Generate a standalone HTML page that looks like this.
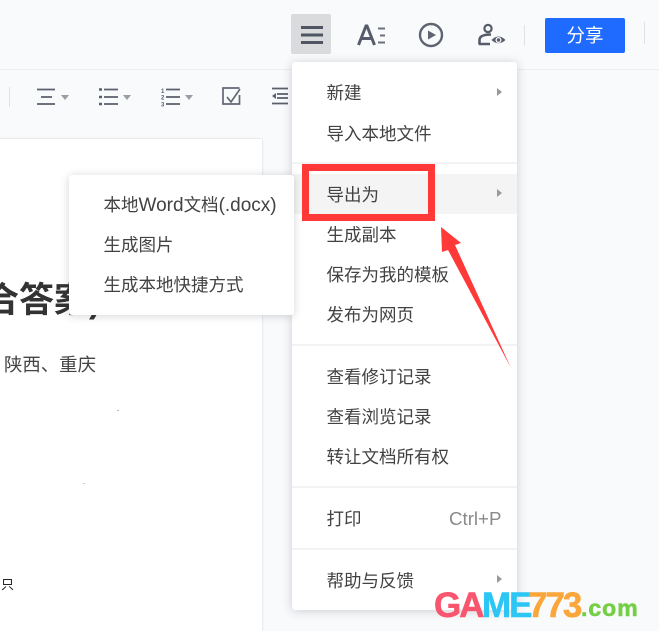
<!DOCTYPE html>
<html lang="zh"><head><meta charset="utf-8">
<style>
html,body{margin:0;padding:0;width:659px;height:631px;overflow:hidden}
body{position:relative;background:#f9fafc;font-family:"Liberation Sans","Noto Sans CJK SC",sans-serif;color:#424242}
.a{position:absolute}
.doc{left:-20px;top:139px;width:282px;height:492px;background:#fff;box-shadow:0 0 2px rgba(0,0,0,.18)}
.hl{left:0;top:69px;width:659px;height:1px;background:#eceef1}
.menu{left:292px;top:62px;width:225px;height:548px;background:#fff;border-radius:3px;box-shadow:0 1px 10px rgba(40,45,60,.22)}
.sub{left:69px;top:175px;width:225px;height:140px;background:#fff;border-radius:3px;box-shadow:0 1px 9px rgba(40,45,60,.2)}
.t{position:absolute;font-size:17.5px;line-height:24px;white-space:nowrap;color:#424242}
.div{position:absolute;left:0;width:225px;height:2px;background:#f3f3f3}
.tri{position:absolute;width:0;height:0;border-left:5px solid #999;border-top:4.5px solid transparent;border-bottom:4.5px solid transparent}
.lg{position:absolute;top:586px;font:bold 35px/40px "Liberation Sans",sans-serif;white-space:nowrap;letter-spacing:-2px;-webkit-text-stroke:.6px currentColor}
</style></head><body>
<div class="a hl"></div>
<div class="a doc"></div>
<div class="a" style="left:-16px;top:280px;font-size:35px;line-height:42px;font-weight:bold;color:#333;white-space:nowrap">合答案)</div>
<div class="a" style="left:4px;top:353px;font-size:18.4px;line-height:24px;color:#444;white-space:nowrap">陕西、重庆</div>
<div class="a" style="left:1px;top:578px;font-size:13px;line-height:14px;color:#222">只</div>
<div class="a" style="left:117px;top:410px;width:2px;height:1px;background:#bbb"></div>
<div class="a" style="left:83px;top:483px;width:2px;height:1px;background:#ccc"></div>

<!-- top toolbar -->
<div class="a" style="left:291px;top:14px;width:40px;height:40px;background:#d9dbdc;border-radius:2px"></div>
<svg class="a" style="left:0;top:0" width="659" height="115" fill="none">
<path d="M301 27.500H323M301 35H323M301 42.500H323" stroke="#4f5563" stroke-width="3"/>
<path d="M358.500 45L366 26H367L374.500 45M361.500 38.500H372" stroke="#565c69" stroke-width="3"/>
<path d="M378 28.500H385M380 35.500H385M378 42.500H385" stroke="#6b707c" stroke-width="2"/>
<circle cx="431" cy="35" r="11" stroke="#5f6470" stroke-width="2.400"/>
<path d="M428 30.500V39.500L436 35Z" fill="#5f6470"/>
<circle cx="488" cy="28.500" r="3.600" stroke="#565c69" stroke-width="2.200"/>
<path d="M479.500 44.500V40C479.500 36 484 34.500 491 34.500M479 44H490" stroke="#565c69" stroke-width="2.600"/>
<path d="M491.500 40Q498.500 33 505.500 40Q498.500 46.500 491.500 40Z" fill="#565c69"/>
<circle cx="498.500" cy="40" r="3" fill="#f9fafc"/><circle cx="498.500" cy="40" r="1.700" fill="#565c69"/>
<path d="M524.500 25V46M644.500 22V44" stroke="#dfe1e4"/>
<!-- format toolbar -->
<path d="M9.500 87V107" stroke="#dfe1e4"/>
<path d="M37 89.500H55M41 97H52M37 104H55" stroke="#5a5f6b" stroke-width="1.700"/>
<path d="M61 95H69L65 100Z" fill="#9a9da3"/>
<path d="M104 89.500H118M104 97H118M104 104H118" stroke="#5a5f6b" stroke-width="1.700"/>
<path d="M99 89.500H102M99 97H102M99 104H102" stroke="#5a5f6b" stroke-width="2.500"/>
<path d="M123 95H131L127 100Z" fill="#9a9da3"/>
<path d="M166 89.500H180M166 97H180M166 104H180" stroke="#5a5f6b" stroke-width="1.700"/>
<text x="161" y="93" font-size="6" font-weight="bold" fill="#5a5f6b" font-family="Liberation Sans">1</text>
<text x="161" y="99.500" font-size="6" font-weight="bold" fill="#5a5f6b" font-family="Liberation Sans">2</text>
<text x="161" y="106.500" font-size="6" font-weight="bold" fill="#5a5f6b" font-family="Liberation Sans">3</text>
<path d="M185 95H193L189 100Z" fill="#9a9da3"/>
<path d="M239.500 88H223V104H239.500V95" stroke="#626773" stroke-width="1.700"/>
<path d="M227 97L231 102L240 89" stroke="#626773" stroke-width="1.700"/>
<path d="M272 88.500H288M277 94H288M277 98H288M272 103.500H288" stroke="#5a5f6b" stroke-width="1.700"/>
<path d="M272 96L276 93V99Z" fill="#5a5f6b"/>
</svg>
<div class="a" style="left:545px;top:18px;width:80px;height:35px;background:#1f6bff;border-radius:2px;color:#fff;font-size:18.5px;line-height:35px;text-align:center">分享</div>

<!-- main menu -->
<div class="a menu">
<div class="a" style="left:0;top:112px;width:225px;height:40px;background:#f4f4f4"></div>
<div class="t" style="left:34.500px;top:19px">新建</div><div class="tri" style="left:205px;top:25.500px"></div>
<div class="t" style="left:34.500px;top:60px">导入本地文件</div>
<div class="div" style="top:100px"></div>
<div class="t" style="left:34.500px;top:121px">导出为</div><div class="tri" style="left:205px;top:127px"></div>
<div class="t" style="left:34.500px;top:161px">生成副本</div>
<div class="t" style="left:34.500px;top:201px">保存为我的模板</div>
<div class="t" style="left:34.500px;top:241px">发布为网页</div>
<div class="div" style="top:282px"></div>
<div class="t" style="left:34.500px;top:303px">查看修订记录</div>
<div class="t" style="left:34.500px;top:343px">查看浏览记录</div>
<div class="t" style="left:34.500px;top:383px">转让文档所有权</div>
<div class="div" style="top:424px"></div>
<div class="t" style="left:34.500px;top:445px">打印</div>
<div class="t" style="left:157px;top:445px;color:#8a8a8a;font-size:18.7px">Ctrl+P</div>
<div class="div" style="top:486px"></div>
<div class="t" style="left:34.500px;top:507px">帮助与反馈</div><div class="tri" style="left:205px;top:513px"></div>
</div>

<!-- submenu -->
<div class="a sub">
<div class="t" style="left:34.500px;top:18px">本地<span style="font-size:19px">Word</span>文档<span style="font-size:19px">(.docx)</span></div>
<div class="t" style="left:34.500px;top:58px">生成图片</div>
<div class="t" style="left:34.500px;top:98px">生成本地快捷方式</div>
</div>

<!-- annotation -->
<div class="a" style="left:302px;top:164px;width:119px;height:43px;border:7px solid #ff3838"></div>
<svg class="a" style="left:0;top:0" width="659" height="631"><path d="M441 227L461 243L455 245L511 368L448 250L442 252Z" fill="#ff3838"/></svg>

<!-- watermark -->
<div class="lg" style="left:434px;color:#f8566f">GA</div>
<div class="lg" style="left:482px;color:#2cc6f5">ME</div>
<div class="lg" style="left:528px;color:#fba63a">773</div>
<div class="lg" style="left:581px;color:#74cf45;font-size:23px;letter-spacing:1px;top:588px">.com</div>
</body></html>
